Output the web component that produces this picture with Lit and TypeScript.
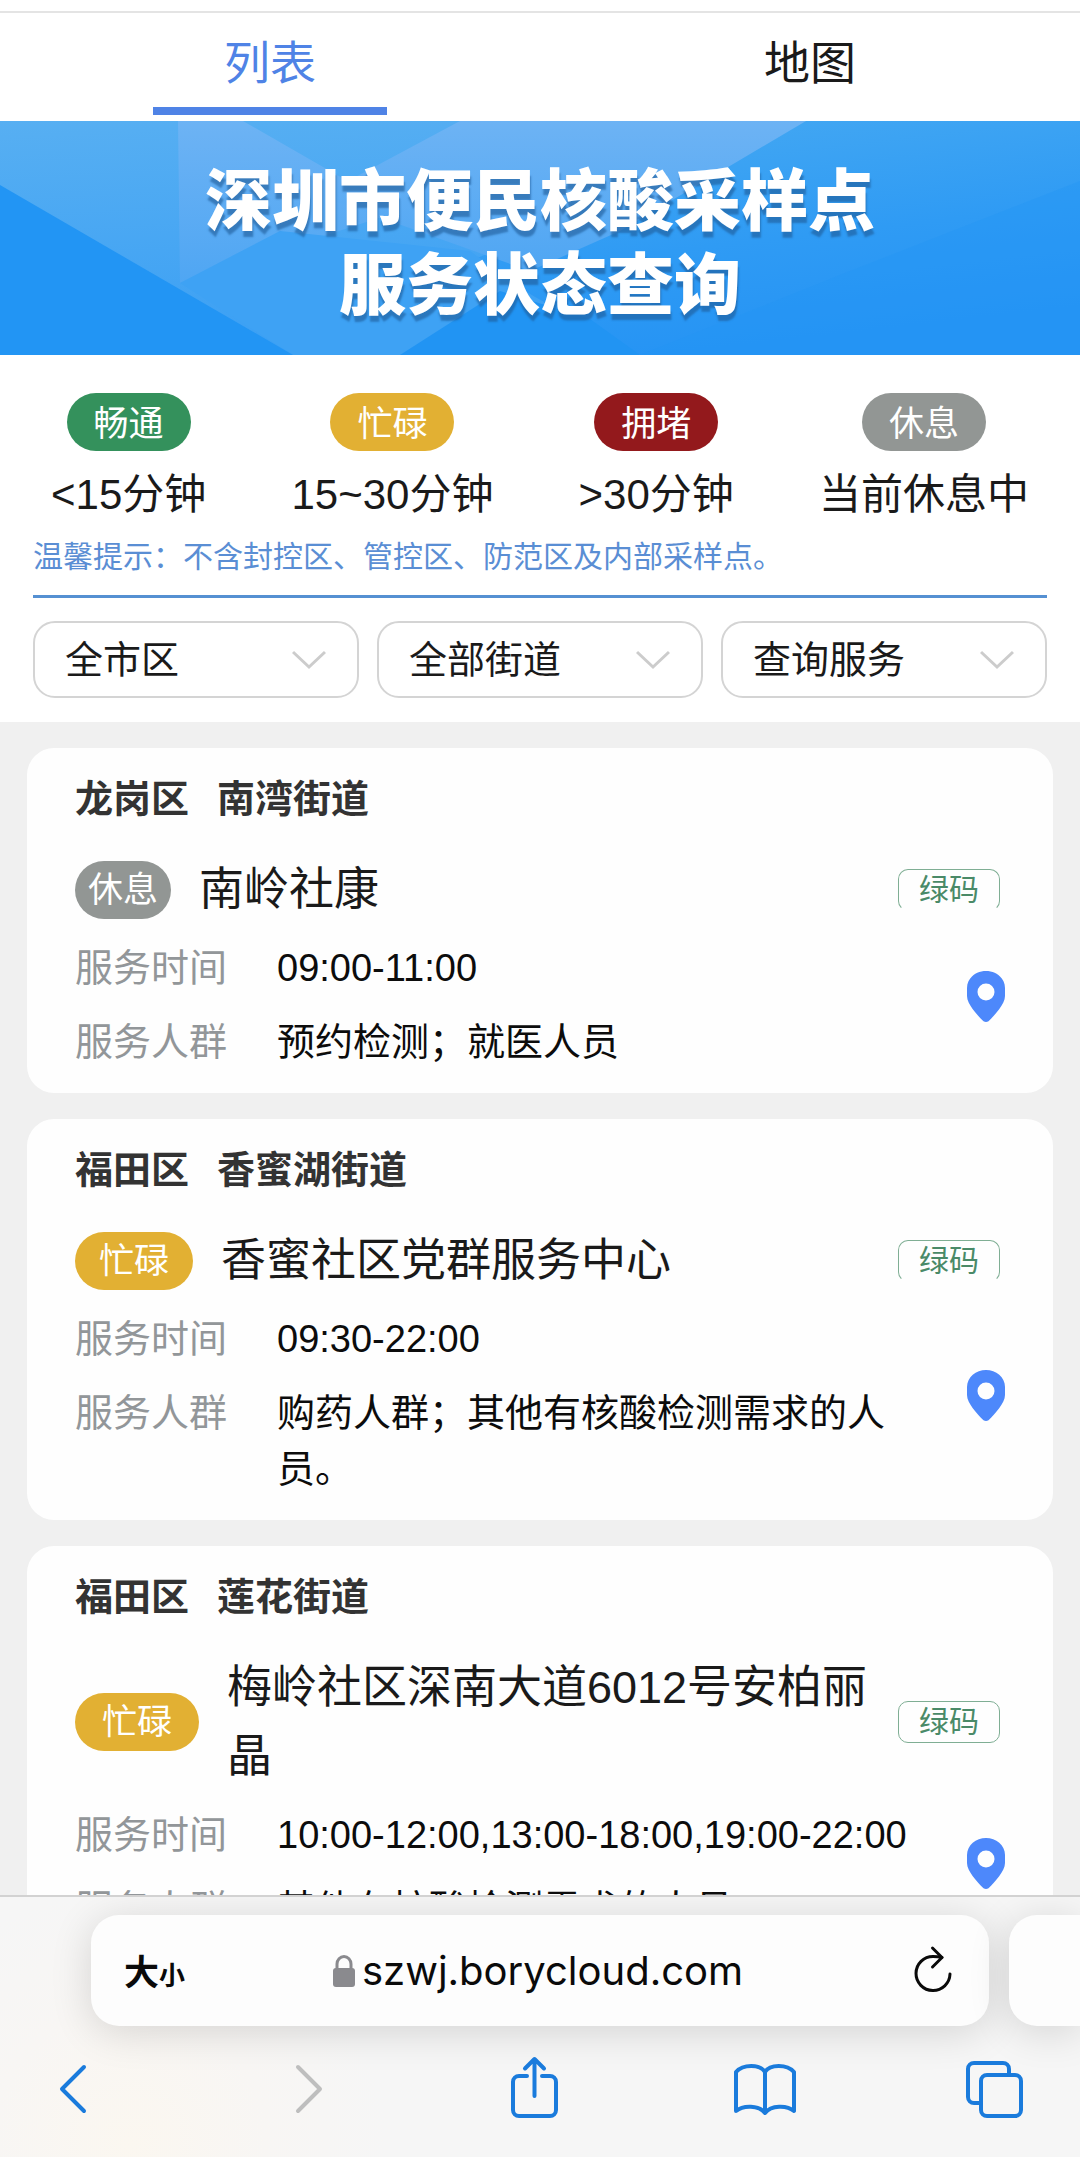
import { LitElement, html, css, svg, nothing } from "lit";
import { customElement, property, state } from "lit/decorators.js";
import { classMap } from "lit/directives/class-map.js";

type Status = "smooth" | "busy" | "crowded" | "rest";

interface Site {
  district: string;
  street: string;
  status: Status;
  name: string;
  hours: string;
  people: string;
}

const STATUS_TEXT: Record<Status, string> = {
  smooth: "畅通",
  busy: "忙碌",
  crowded: "拥堵",
  rest: "休息",
};

const LEGEND: { status: Status; wait: string }[] = [
  { status: "smooth", wait: "<15分钟" },
  { status: "busy", wait: "15~30分钟" },
  { status: "crowded", wait: ">30分钟" },
  { status: "rest", wait: "当前休息中" },
];

const FILTERS = [
  { label: "区域", value: "全市区" },
  { label: "街道", value: "全部街道" },
  { label: "服务", value: "查询服务" },
];

const SITES: Site[] = [
  {
    district: "龙岗区",
    street: "南湾街道",
    status: "rest",
    name: "南岭社康",
    hours: "09:00-11:00",
    people: "预约检测；就医人员",
  },
  {
    district: "福田区",
    street: "香蜜湖街道",
    status: "busy",
    name: "香蜜社区党群服务中心",
    hours: "09:30-22:00",
    people: "购药人群；其他有核酸检测需求的人员。",
  },
  {
    district: "福田区",
    street: "莲花街道",
    status: "busy",
    name: "梅岭社区深南大道6012号安柏丽晶",
    hours: "10:00-12:00,13:00-18:00,19:00-22:00",
    people: "其他有核酸检测需求的人员",
  },
];

const reset = css`
  * {
    box-sizing: border-box;
    margin: 0;
  }
  button,
  select {
    padding: 0;
    border: 0;
    background: none;
    font: inherit;
    color: inherit;
    appearance: none;
  }
  svg {
    display: block;
    fill: none;
  }
`;

@customElement("status-pill")
export class StatusPill extends LitElement {
  @property() status: Status = "smooth";

  static styles = css`
    :host {
      display: block;
      flex: none;
    }
    .pill {
      padding: 4px 27px 0;
      border-radius: 29px;
      color: #fff;
      font-size: 35px;
      line-height: 54px;
      white-space: nowrap;
    }
    :host([size="card"]) .pill {
      padding: 0 24px;
      line-height: 58px;
    }
    :host([size="wide"]) .pill {
      padding: 0 27px;
      line-height: 58px;
    }
    :host([size="card"][status="rest"]) .pill {
      padding: 0 13px;
    }
    .smooth {
      background: #34915c;
    }
    .busy {
      background: #e2b033;
    }
    .crowded {
      background: #93191c;
    }
    .rest {
      background: #929694;
    }
  `;

  render() {
    return html`<div class=${classMap({ pill: true, [this.status]: true })}>
      ${STATUS_TEXT[this.status]}
    </div>`;
  }
}

@customElement("site-card")
export class SiteCard extends LitElement {
  @property({ attribute: false }) site!: Site;

  static styles = [
    reset,
    css`
      :host {
        display: block;
        flex: none;
      }
      .card {
        padding: 23px 48px;
        border-radius: 27px;
        background: #fefefe;
      }
      .area {
        display: flex;
        gap: 28px;
        color: #333;
        font-size: 38px;
        font-weight: 600;
        line-height: 56px;
      }
      .head {
        display: flex;
        align-items: center;
        gap: 28px;
        margin-top: 28px;
        padding-right: 5px;
      }
      .name {
        flex: 1;
        color: #1a1a1a;
        font-size: 45px;
        font-weight: 400;
        line-height: 69px;
      }
      .tag {
        flex: none;
        padding: 0 20px;
        border: 1px solid #7fae94;
        border-radius: 10px;
        color: #4a8a68;
        font-size: 30px;
        line-height: 40px;
      }
      .tag.open {
        border-bottom-color: transparent;
      }
      .body {
        display: flex;
        align-items: center;
        justify-content: space-between;
        gap: 50px;
        margin-top: 16px;
      }
      .facts {
        flex: 1;
        display: grid;
        grid-template-columns: max-content 1fr;
        gap: 18px 50px;
        font-size: 38px;
        line-height: 56px;
      }
      .facts dt {
        color: #929699;
      }
      .facts dd {
        color: #0c0c0c;
      }
      .pin {
        flex: none;
        margin-bottom: 18px;
        cursor: pointer;
      }
    `,
  ];

  render() {
    const s = this.site;
    const long = s.name.length > 13;
    return html`
      <article class="card">
        <p class="area"><span>${s.district}</span><span>${s.street}</span></p>
        <div class="head">
          <status-pill size=${long ? "wide" : "card"} status=${s.status}></status-pill>
          <h2 class="name">${s.name}</h2>
          <span class=${classMap({ tag: true, open: !long })}>绿码</span>
        </div>
        <div class="body">
          <dl class="facts">
            <dt>服务时间</dt>
            <dd>${s.hours}</dd>
            <dt>服务人群</dt>
            <dd>${s.people}</dd>
          </dl>
          <button class="pin" aria-label="导航">
            <svg width="38" height="51" viewBox="0 0 38 51">
              <path
                fill="#4d88fb"
                fill-rule="evenodd"
                d="M19 0C9 0 0 7 0 17v8c0 8 10 19 16.500 25.200q2.500 1.500 5 0C28 44 38 33 38 25v-8C38 7 29 0 19 0ZM19 12.500a8.500 8.500 0 1 1 0 17a8.500 8.500 0 1 1 0-17Z"
              />
            </svg>
          </button>
        </div>
      </article>
    `;
  }
}

@customElement("browser-bar")
export class BrowserBar extends LitElement {
  static styles = [
    reset,
    css`
      :host {
        display: block;
        flex: none;
      }
      .bar {
        overflow: hidden;
        border-top: 2px solid #d2d2d2;
        background: radial-gradient(circle at 12% 95%, #fbf7f0 0, #f8f6f4 14%, #f6f6f6 26%);
      }
      .tabs {
        display: flex;
        gap: 20px;
        padding: 18px 0 0 91px;
      }
      .address,
      .next {
        height: 111px;
        background: #fdfdfd;
        box-shadow: 0 6px 42px rgba(0, 0, 0, 0.14);
      }
      .address {
        flex: 1;
        display: grid;
        grid-template-columns: 1fr auto 1fr;
        align-items: center;
        padding: 0 37px 0 33px;
        border-radius: 28px;
      }
      .next {
        width: 71px;
        border-radius: 28px 0 0 28px;
      }
      .size {
        justify-self: start;
        padding-top: 8px;
        color: #0a0a0a;
        font-size: 35px;
        font-weight: 600;
        line-height: 56px;
      }
      .size small {
        font-size: 26px;
      }
      .url {
        display: flex;
        align-items: center;
        gap: 7px;
        color: #0a0a0a;
        font-family: Inter, "Liberation Sans", sans-serif;
        font-size: 40px;
        line-height: 56px;
      }
      .reload {
        justify-self: end;
      }
      .tools {
        display: flex;
        justify-content: space-between;
        padding: 29px 46px 34px 33px;
      }
      .tools svg {
        stroke: #1a7bdc;
        stroke-width: 4;
        stroke-linecap: round;
        stroke-linejoin: round;
      }
      .tools .off {
        stroke: #bebebe;
      }
    `,
  ];

  private tool(label: string, shape: unknown, off = false) {
    return html`<button aria-label=${label} ?disabled=${off}>
      <svg class=${off ? "off" : nothing} width="80" height="68" viewBox="0 0 80 68">${shape}</svg>
    </button>`;
  }

  render() {
    return html`
      <nav class="bar" aria-label="浏览器">
        <div class="tabs">
          <div class="address">
            <button class="size">大<small>小</small></button>
            <button class="url">
              <svg width="22" height="32" viewBox="0 0 22 32">
                <rect y="13" width="22" height="19" rx="3" fill="#8a8a8e" />
                <path d="M4 15V9a7 7.500 0 0 1 14 0v6" stroke="#8a8a8e" stroke-width="3" />
              </svg>
              <span>szwj.borycloud.com</span>
            </button>
            <button class="reload" aria-label="重新载入">
              <svg
                width="38"
                height="56"
                viewBox="0 0 38 56"
                stroke="#0a0a0a"
                stroke-width="3"
                stroke-linecap="round"
                stroke-linejoin="round"
              >
                <path d="M36 31A17 17 0 1 1 19 13.500q5 0 9 1" />
                <path d="M18.500 5 28 14.500 18.500 24" />
              </svg>
            </button>
          </div>
          <div class="next"></div>
        </div>
        <div class="tools">
          ${this.tool("后退", svg`<path d="M51 12 29 34 51 56" />`)}
          ${this.tool("前进", svg`<path d="M35 12 57 34 35 56" />`, true)}
          ${this.tool(
            "分享",
            svg`<path d="M33 21H25a6 6 0 0 0-6 6v28a6 6 0 0 0 6 6h31a6 6 0 0 0 6-6V27a6 6 0 0 0-6-6h-8" />
              <path d="M40.500 41V4M31 13.500 40.500 4 50 13.500" />`
          )}
          ${this.tool(
            "书签",
            svg`<path d="M41 17C36 9 19 9 12 17V56C19 50 35 50 41 58C47 50 63 50 70 56V17C63 9 46 9 41 17V58" />`
          )}
          ${this.tool(
            "标签页",
            svg`<rect x="27" y="20" width="40" height="41" rx="6" />
              <path d="M27 48H20a6 6 0 0 1-6-6V14a6 6 0 0 1 6-6h29a6 6 0 0 1 6 6v6" />`
          )}
        </div>
      </nav>
    `;
  }
}

@customElement("app-root")
export class AppRoot extends LitElement {
  @state() private view = "列表";

  static styles = [
    reset,
    css`
      :host {
        display: flex;
        flex-direction: column;
        height: 100vh;
        overflow: hidden;
        background: #fff;
        color: #1a1a1a;
        font-family: "Liberation Sans", "Noto Sans CJK SC", sans-serif;
      }
      .strip {
        flex: none;
        height: 13px;
        border-bottom: 2px solid #e4e4e4;
      }
      .views {
        flex: none;
        display: flex;
      }
      .view {
        flex: 1;
        display: flex;
        flex-direction: column;
        align-items: center;
        gap: 12px;
        padding: 18px 0 6px;
        font-size: 46px;
        line-height: 64px;
      }
      .view::after {
        content: "";
        width: 234px;
        height: 8px;
      }
      .view.on {
        color: #4f83e6;
      }
      .view.on::after {
        background: #4f83e6;
      }
      .banner {
        flex: none;
        display: grid;
      }
      .banner > * {
        grid-area: 1 / 1;
      }
      .art {
        width: 100%;
        height: 100%;
      }
      .title {
        padding: 39px 0 27px;
        color: #fff;
        font-size: 67px;
        font-weight: 900;
        line-height: 84px;
        text-align: center;
        text-shadow: 1px 6px 2px rgba(30, 90, 150, 0.6);
      }
      .title span {
        display: block;
      }
      .info {
        flex: none;
        padding: 38px 33px 24px;
      }
      .legend {
        display: flex;
        justify-content: space-between;
        padding: 0 18px;
        list-style: none;
      }
      .legend li {
        display: flex;
        flex-direction: column;
        align-items: center;
        gap: 16px;
        font-size: 42px;
        line-height: 56px;
      }
      .tip {
        margin-top: 12px;
        padding-bottom: 16px;
        border-bottom: 3px solid #5590d2;
        color: #5a8ed4;
        font-size: 30px;
        line-height: 44px;
      }
      .filters {
        display: grid;
        grid-template-columns: repeat(3, 1fr);
        gap: 18px;
        margin-top: 23px;
      }
      .filter {
        display: grid;
        align-items: center;
      }
      .filter > * {
        grid-area: 1 / 1;
      }
      .filter select {
        width: 100%;
        height: 77px;
        padding: 0 30px;
        border: 2px solid #d4d4d4;
        border-radius: 22px;
        font-size: 38px;
      }
      .filter svg {
        justify-self: end;
        margin-right: 33px;
        pointer-events: none;
      }
      .list {
        flex: 1;
        min-height: 0;
        display: flex;
        flex-direction: column;
        gap: 26px;
        overflow: auto;
        scrollbar-width: none;
        padding: 26px 27px;
        background: #f0f0f0;
      }
    `,
  ];

  render() {
    return html`
      <div class="strip"></div>
      <nav class="views">
        ${["列表", "地图"].map(
          (v) => html`<button
            class=${classMap({ view: true, on: this.view === v })}
            @click=${() => (this.view = v)}
          >
            ${v}
          </button>`
        )}
      </nav>
      <header class="banner">
        <svg class="art" viewBox="0 0 1080 234" width="0" height="0" preserveAspectRatio="none">
          <defs>
            <linearGradient id="sky" x2="0.250" y2="1">
              <stop offset="0" stop-color="#57aff2" />
              <stop offset="1" stop-color="#3a9ff4" />
            </linearGradient>
            <linearGradient id="deep" x2="0.300" y2="1">
              <stop offset="0" stop-color="#46a9f2" />
              <stop offset="0.600" stop-color="#2f9bf4" />
              <stop offset="1" stop-color="#2694f4" />
            </linearGradient>
            <linearGradient id="haze" x2="0" y2="1">
              <stop offset="0" stop-color="#6db3f4" />
              <stop offset="1" stop-color="#4fa6f3" />
            </linearGradient>
          </defs>
          <rect width="1080" height="234" fill="url(#sky)" />
          <path d="M806 0H1080V234H640L470 140Z" fill="url(#deep)" />
          <path d="M178 0H243L330 50L400 90L180 162Z" fill="url(#haze)" />
          <path d="M460 0H806L620 110L530 150L320 75Z" fill="url(#haze)" />
          <path d="M180 162L280 110L470 130L540 180L400 234H293Z" fill="#3ea2f4" />
          <path d="M400 234L500 170L590 198L640 234Z" fill="#2194f3" />
          <path d="M0 64L293 234H0Z" fill="#2295f4" />
          <path d="M640 234L850 150L1080 60V234Z" fill="#2294f4" fill-opacity="0.350" />
        </svg>
        <h1 class="title"><span>深圳市便民核酸采样点</span><span>服务状态查询</span></h1>
      </header>
      <section class="info">
        <ul class="legend">
          ${LEGEND.map(
            (l) => html`<li><status-pill status=${l.status}></status-pill>${l.wait}</li>`
          )}
        </ul>
        <p class="tip">温馨提示：不含封控区、管控区、防范区及内部采样点。</p>
        <div class="filters">
          ${FILTERS.map(
            (f) => html`<label class="filter">
              <select aria-label=${f.label}>
                <option>${f.value}</option>
              </select>
              <svg width="34" height="20" viewBox="0 0 34 20">
                <path d="M1 2 17 17 33 2" stroke="#cccccc" stroke-width="3" />
              </svg>
            </label>`
          )}
        </div>
      </section>
      <main class="list">
        ${SITES.map((s) => html`<site-card .site=${s}></site-card>`)}
      </main>
      <browser-bar></browser-bar>
    `;
  }
}
